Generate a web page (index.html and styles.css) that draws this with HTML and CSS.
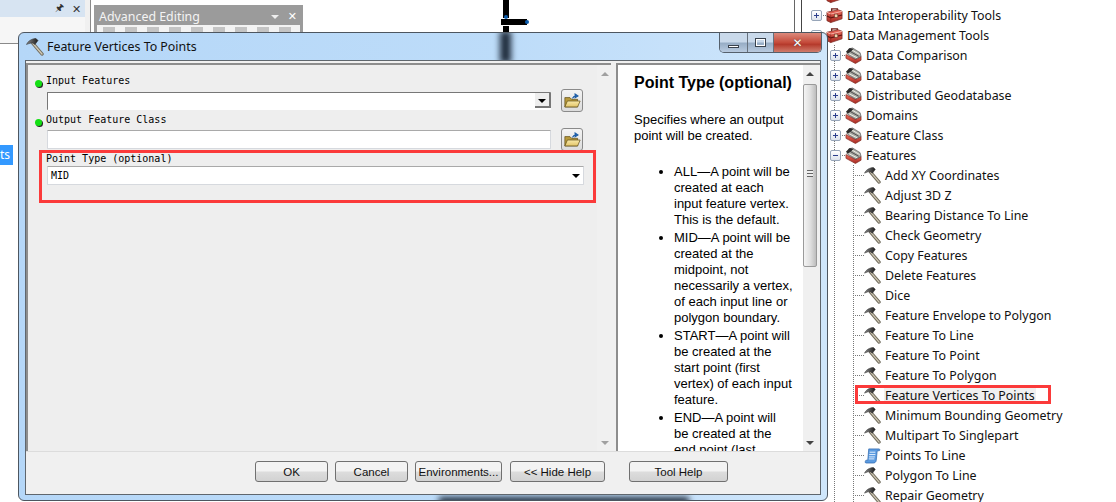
FILE: index.html
```html
<!DOCTYPE html>
<html lang="en">
<head>
    <meta charset="UTF-8">
    <meta name="viewport" content="width=device-width, initial-scale=1.0">
    <title>Feature Vertices To Points</title>
    <link rel="stylesheet" href="styles.css">
</head>
<body>
    <!-- shared tree and button icons -->
    <svg class="icon-defs" width="0" height="0">
        <defs>
            <linearGradient id="headFill" x1="0" y1="0" x2="1" y2="0">
                <stop offset="0" stop-color="#8a8a8a"/>
                <stop offset="1" stop-color="#1c1c1c"/>
            </linearGradient>
            <linearGradient id="boxFill" x1="0" y1="0" x2="0" y2="1">
                <stop offset="0" stop-color="#ee6a5c"/>
                <stop offset="1" stop-color="#a52a22"/>
            </linearGradient>
            <linearGradient id="folderFill" x1="0" y1="0" x2="0" y2="1">
                <stop offset="0" stop-color="#f8e9a8"/>
                <stop offset="1" stop-color="#e2c468"/>
            </linearGradient>
            <symbol id="hammer" viewBox="0 0 18 18">
                <path d="M7 5.5 L16 16" stroke="#6f6a5c" stroke-width="3.4" stroke-linecap="round"/>
                <path d="M7 5.5 L16 16" stroke="#cfc8b4" stroke-width="1.4" stroke-linecap="round"/>
                <path d="M.5 6.5 C2 3 6 .5 10 .5 L12 2.5 L9 6.5 L6.5 5 C4.5 5 3 5.5 .5 6.5 Z" fill="url(#headFill)" stroke="#2c2c2c" stroke-width=".5"/>
            </symbol>
            <symbol id="toolbox" viewBox="0 0 18 17">
                <path d="M6 4 V1.5 H12 V3" fill="none" stroke="#6e2018" stroke-width="1.5"/>
                <path d="M1 5 L13 2.5 L17 4 V12 L5 16 L1 14 Z" fill="url(#boxFill)" stroke="#7c2a22" stroke-width=".8"/>
                <path d="M1 5 L5 7 L17 4" fill="none" stroke="#f7b8ac" stroke-width="1"/>
                <path d="M1 9 L5 11 L17 8" fill="none" stroke="#5e1610" stroke-width="1.2"/>
                <path d="M5 7 V16" stroke="#8a241c" stroke-width=".7"/>
                <rect x="9" y="7" width="3.5" height="3.5" fill="#ecd6ae" stroke="#5a1e18" stroke-width=".5"/>
            </symbol>
            <symbol id="toolset" viewBox="0 0 18 18">
                <path d="M1 8 L11 13 L17 10 V14 L11 17.5 L1 12 Z" fill="url(#boxFill)" stroke="#7c2a22" stroke-width=".7"/>
                <path d="M2 7 L4 2 L8 1 L16 6 L17 10 L11 13 Z" fill="#a8a8a2" stroke="#444" stroke-width=".6"/>
                <path d="M7 3 L15.5 8 M4 7 L13 11.5" stroke="#f0f0e8" stroke-width="1"/>
                <path d="M6 5 L14.5 9.8" stroke="#4a4a4a" stroke-width="1"/>
                <path d="M1 5 L5 1 L9 2 L6 5 L3 7 Z" fill="#2c2c2c"/>
            </symbol>
            <symbol id="script" viewBox="0 0 18 18">
                <path d="M5 2 H16 C17 2 17 4 16 4 L14 4 L13 14 C13 16 11 17 10 17 H2 C1 17 1 14 2.5 14 H4 Z" fill="#5b9be0" stroke="#2460a8" stroke-width=".7"/>
                <path d="M6 5.5 H12 M5.5 8 H12 M5.2 10.5 H11.5 M5 12.6 H11" stroke="#e8f2ff" stroke-width="1"/>
            </symbol>
            <symbol id="folder" viewBox="0 0 20 18">
                <path d="M1 16 V5 H7 L9 7 H16 V16 Z" fill="#b89a3c" stroke="#5c4a14" stroke-width=".8"/>
                <path d="M1 16 L4 9 H19 L16 16 Z" fill="url(#folderFill)" stroke="#5c4a14" stroke-width=".8"/>
                <path d="M10 6 C11 3 13 3 14 3 M13 0.8 L16.5 3 L13 5.2 Z" fill="#1f5fa8" stroke="#1f5fa8" stroke-width="1.2"/>
            </symbol>
        </defs>
    </svg>

    <div class="desktop">
        <!-- windows behind the dialog -->
        <div class="dock-window">
            <div class="dock-title">
                <span class="dock-pin">&#128392;</span>
                <span class="dock-close">&#10005;</span>
            </div>
        </div>
        <div class="dock-tab">ts</div>

        <div class="floating-toolbar">
            <div class="floating-title">
                <span class="floating-name">Advanced Editing</span>
                <span class="floating-arrow"></span>
                <span class="floating-close">&#10005;</span>
            </div>
            <div class="floating-icons"></div>
        </div>

        <svg class="map-sketch" width="40" height="34" viewBox="0 0 40 34">
            <path d="M7 0 V18 M2 22 H28 M7 26 V34" stroke="#000" stroke-width="6"/>
            <circle cx="7" cy="17" r="2" fill="#0b5cad"/>
            <circle cx="28" cy="22" r="2" fill="#0b5cad"/>
        </svg>

        <div class="catalog-edge"></div>

        <!-- toolbox tree -->
        <div class="catalog">
            <div class="tree-guide guide-tools"></div>
            <div class="tree-guide guide-set"></div>
            <ul class="tree">
                <li class="row row-box"><svg class="ico"><use href="#toolbox"/></svg></li>
                <li class="row row-box"><span class="toggle plus"></span><svg class="ico"><use href="#toolbox"/></svg><span class="label">Data Interoperability Tools</span></li>
                <li class="row row-box"><span class="toggle minus"></span><svg class="ico"><use href="#toolbox"/></svg><span class="label">Data Management Tools</span></li>
                <li class="row row-set"><span class="toggle plus"></span><svg class="ico"><use href="#toolset"/></svg><span class="label">Data Comparison</span></li>
                <li class="row row-set"><span class="toggle plus"></span><svg class="ico"><use href="#toolset"/></svg><span class="label">Database</span></li>
                <li class="row row-set"><span class="toggle plus"></span><svg class="ico"><use href="#toolset"/></svg><span class="label">Distributed Geodatabase</span></li>
                <li class="row row-set"><span class="toggle plus"></span><svg class="ico"><use href="#toolset"/></svg><span class="label">Domains</span></li>
                <li class="row row-set"><span class="toggle plus"></span><svg class="ico"><use href="#toolset"/></svg><span class="label">Feature Class</span></li>
                <li class="row row-set"><span class="toggle minus"></span><svg class="ico"><use href="#toolset"/></svg><span class="label">Features</span></li>
                <li class="row row-tool"><svg class="ico"><use href="#hammer"/></svg><span class="label">Add XY Coordinates</span></li>
                <li class="row row-tool"><svg class="ico"><use href="#hammer"/></svg><span class="label">Adjust 3D Z</span></li>
                <li class="row row-tool"><svg class="ico"><use href="#hammer"/></svg><span class="label">Bearing Distance To Line</span></li>
                <li class="row row-tool"><svg class="ico"><use href="#hammer"/></svg><span class="label">Check Geometry</span></li>
                <li class="row row-tool"><svg class="ico"><use href="#hammer"/></svg><span class="label">Copy Features</span></li>
                <li class="row row-tool"><svg class="ico"><use href="#hammer"/></svg><span class="label">Delete Features</span></li>
                <li class="row row-tool"><svg class="ico"><use href="#hammer"/></svg><span class="label">Dice</span></li>
                <li class="row row-tool"><svg class="ico"><use href="#hammer"/></svg><span class="label">Feature Envelope to Polygon</span></li>
                <li class="row row-tool"><svg class="ico"><use href="#hammer"/></svg><span class="label">Feature To Line</span></li>
                <li class="row row-tool"><svg class="ico"><use href="#hammer"/></svg><span class="label">Feature To Point</span></li>
                <li class="row row-tool"><svg class="ico"><use href="#hammer"/></svg><span class="label">Feature To Polygon</span></li>
                <li class="row row-tool selected"><svg class="ico"><use href="#hammer"/></svg><span class="label">Feature Vertices To Points</span></li>
                <li class="row row-tool"><svg class="ico"><use href="#hammer"/></svg><span class="label">Minimum Bounding Geometry</span></li>
                <li class="row row-tool"><svg class="ico"><use href="#hammer"/></svg><span class="label">Multipart To Singlepart</span></li>
                <li class="row row-tool"><svg class="ico"><use href="#script"/></svg><span class="label">Points To Line</span></li>
                <li class="row row-tool"><svg class="ico"><use href="#hammer"/></svg><span class="label">Polygon To Line</span></li>
                <li class="row row-tool"><svg class="ico"><use href="#hammer"/></svg><span class="label">Repair Geometry</span></li>
            </ul>
        </div>

        <!-- tool dialog -->
        <div class="dialog">
            <div class="glass-smear smear-title"></div>
            <div class="glass-smear smear-bottom"></div>
            <div class="titlebar">
                <svg class="title-icon"><use href="#hammer"/></svg>
                <span class="title-text">Feature Vertices To Points</span>
                <div class="caption-buttons">
                    <span class="cap cap-min"><i></i></span>
                    <span class="cap cap-max"><i></i></span>
                    <span class="cap cap-close">&#10005;</span>
                </div>
            </div>
            <div class="client">
                <div class="panes">
                    <div class="form-pane">
                        <div class="form-scroll">
                            <div class="param param-first">
                                <span class="req-dot"></span>
                                <label class="param-label">Input Features</label>
                                <div class="param-row">
                                    <div class="field field-sunken"><span class="drop-btn"></span></div>
                                    <button class="browse" type="button"><svg><use href="#folder"/></svg></button>
                                </div>
                            </div>
                            <div class="param param-second">
                                <span class="req-dot"></span>
                                <label class="param-label">Output Feature Class</label>
                                <div class="param-row">
                                    <div class="field"></div>
                                    <button class="browse" type="button"><svg><use href="#folder"/></svg></button>
                                </div>
                            </div>
                            <div class="param param-third">
                                <label class="param-label">Point Type (optional)</label>
                                <div class="field field-wide"><span class="field-value">MID</span><span class="drop-arrow"></span></div>
                            </div>
                        </div>
                        <div class="scrollbar scrollbar-empty">
                            <span class="arrow-up"></span>
                            <span class="arrow-down"></span>
                        </div>
                    </div>
                    <div class="help-pane">
                        <div class="help-text">
                            <h2>Point Type (optional)</h2>
                            <p>Specifies where an output point will be created.</p>
                            <ul>
                                <li>ALL&mdash;A point will be created at each input feature vertex. This is the default.</li>
                                <li>MID&mdash;A point will be created at the midpoint, not necessarily a vertex, of each input line or polygon boundary.</li>
                                <li>START&mdash;A point will be created at the start point (first vertex) of each input feature.</li>
                                <li>END&mdash;A point will be created at the end point (last</li>
                            </ul>
                        </div>
                        <div class="scrollbar">
                            <span class="arrow-up arrow-dark"></span>
                            <span class="thumb"><i></i></span>
                            <span class="arrow-down arrow-dark"></span>
                        </div>
                    </div>
                </div>
                <div class="button-bar">
                    <button class="btn btn-ok" type="button">OK</button>
                    <button class="btn btn-cancel" type="button">Cancel</button>
                    <button class="btn btn-env" type="button">Environments...</button>
                    <button class="btn btn-hide" type="button">&lt;&lt; Hide Help</button>
                    <button class="btn btn-tool" type="button">Tool Help</button>
                </div>
            </div>
        </div>

        <!-- red callouts drawn on top -->
        <div class="callout callout-param"></div>
        <div class="callout callout-tool"></div>
    </div>
</body>
</html>
```

FILE: styles.css
```css
html, body {
    margin: 0;
    padding: 0;
    background-color: #fff;
}
.icon-defs {
    position: absolute;
}
.desktop {
    position: relative;
    width: 1116px;
    height: 502px;
    overflow: hidden;
    background-color: #fff;
    font-family: "Noto Sans", sans-serif;
    font-size: 12px;
    color: #111;
}

/* windows in the background */
.dock-window {
    position: absolute;
    left: 0;
    top: 0;
    width: 85px;
    height: 43px;
    background-color: #f6f6f6;
    border-right: 5px solid #f0f0f0;
    border-bottom: 1px solid #8a8a8a;
    box-shadow: 1px 0 0 #8a8a8a;
}
.dock-title {
    display: flex;
    justify-content: flex-end;
    align-items: center;
    gap: 8px;
    height: 17px;
    padding-right: 4px;
    background-color: #d7e4f2;
    color: #333;
    font-size: 11px;
}
.dock-pin {
    font-size: 10px;
    font-family: "DejaVu Sans", sans-serif;
}
.dock-tab {
    position: absolute;
    left: 0;
    top: 145px;
    width: 13px;
    height: 20px;
    background-color: #3399ff;
    color: #fff;
    font-size: 12px;
    line-height: 20px;
}
.floating-toolbar {
    position: absolute;
    left: 94px;
    top: 5px;
    width: 203px;
    height: 27px;
    border: 3px solid #9b9b9b;
    border-bottom: none;
    background-color: #f3f3f3;
}
.floating-title {
    display: flex;
    align-items: center;
    height: 17px;
    padding: 0 3px 0 2px;
    background-color: #9b9b9b;
    color: #f4f4f4;
}
.floating-name {
    flex: 1;
    font-size: 12.4px;
}
.floating-arrow {
    width: 0;
    height: 0;
    margin-right: 9px;
    border-left: 4px solid transparent;
    border-right: 4px solid transparent;
    border-top: 4px solid #eee;
}
.floating-close {
    font-size: 11px;
    font-weight: bold;
    font-family: "DejaVu Sans", sans-serif;
    color: #fff;
}
.floating-icons {
    height: 5px;
    margin: 2px 6px 0;
    background: repeating-linear-gradient(90deg, #c4c4c4 0 12px, #f3f3f3 12px 22px);
}
.map-sketch {
    position: absolute;
    left: 499px;
    top: 0;
}
.catalog-edge {
    position: absolute;
    left: 794px;
    top: 0;
    width: 6px;
    height: 34px;
    border-left: 1px solid #666;
    border-right: 1px solid #444;
}

/* catalog tree */
.catalog {
    position: absolute;
    left: 803px;
    top: 0;
    right: 0;
    bottom: 0;
    overflow: hidden;
}
.tree {
    list-style: none;
    margin: -15px 0 0;
    padding: 0;
}
.row {
    position: relative;
    display: flex;
    align-items: center;
    height: 20px;
    white-space: nowrap;
}
.row-box {
    padding-left: 23px;
}
.row-set {
    padding-left: 42px;
}
.row-tool {
    padding-left: 61px;
}
.ico {
    flex: none;
    width: 17px;
    height: 17px;
    margin-right: 4px;
}
.label {
    margin-left: -1px;
    padding: 0 1px;
    font-size: 12.4px;
    line-height: 17px;
}
.selected .label {
    background-color: #f0f0f0;
}
.toggle {
    position: absolute;
    top: 5px;
    width: 9px;
    height: 9px;
    border: 1px solid #97a5b8;
    border-radius: 2px;
    background: linear-gradient(#fff, #dde3ec);
}
.row-box .toggle {
    left: 8px;
}
.row-set .toggle {
    left: 27px;
}
.toggle::before {
    content: "";
    position: absolute;
    left: 2px;
    top: 4px;
    width: 5px;
    height: 1px;
    background-color: #2c3f8c;
}
.toggle.plus::after {
    content: "";
    position: absolute;
    left: 4px;
    top: 2px;
    width: 1px;
    height: 5px;
    background-color: #2c3f8c;
}
/* horizontal dotted connector beside each node */
.row-box::before,
.row-set::before,
.row-tool::before {
    content: "";
    position: absolute;
    top: 10px;
    height: 0;
    border-top: 1px dotted #777;
}
.row-box::before {
    left: 18px;
    width: 5px;
}
.row-set::before {
    left: 37px;
    width: 5px;
}
.row-tool::before {
    left: 50px;
    width: 11px;
}
.tree-guide {
    position: absolute;
    width: 0;
    border-left: 1px dotted #777;
}
.guide-tools {
    left: 31px;
    top: 45px;
    bottom: 0;
}
.guide-set {
    left: 50px;
    top: 165px;
    bottom: 0;
}

/* dialog frame */
.dialog {
    position: absolute;
    left: 18px;
    top: 32px;
    width: 808px;
    height: 467px;
    display: flex;
    flex-direction: column;
    border: 1px solid #4d5660;
    border-radius: 6px;
    background: linear-gradient(90deg, #b5d7f8, #bddcf9 60%, #cfe6fb);
    overflow: hidden;
}
.glass-smear {
    position: absolute;
    background-color: #1d2a3a;
    filter: blur(3px);
}
.smear-title {
    left: 481px;
    top: -2px;
    width: 11px;
    height: 32px;
}
.smear-bottom {
    left: 420px;
    top: 464px;
    width: 250px;
    height: 8px;
}
.titlebar {
    position: relative;
    display: flex;
    align-items: center;
    flex: none;
    height: 27px;
    padding-left: 7px;
}
.title-icon {
    width: 18px;
    height: 18px;
    margin-right: 3px;
}
.title-text {
    font-size: 12.4px;
}
.caption-buttons {
    position: absolute;
    right: 5px;
    top: 0;
    display: flex;
    height: 19px;
    border: 1px solid #55606c;
    border-top: none;
    border-radius: 0 0 5px 5px;
    overflow: hidden;
}
.cap {
    display: flex;
    align-items: center;
    justify-content: center;
    height: 19px;
    background: linear-gradient(#c9d9ea 45%, #98aec6 55%, #b9cbe0);
    border-right: 1px solid #66717d;
}
.cap-min {
    width: 27px;
}
.cap-min i {
    width: 11px;
    height: 3px;
    margin-top: 7px;
    border: 1px solid #39424d;
    background-color: #fff;
    box-sizing: border-box;
}
.cap-max {
    width: 25px;
}
.cap-max i {
    width: 11px;
    height: 9px;
    border: 1px solid #39424d;
    box-sizing: border-box;
    box-shadow: inset 0 0 0 1px #fff;
}
.cap-close {
    width: 47px;
    border-right: none;
    background: linear-gradient(#dc8a7c, #c44a3a 50%, #b53a2c 60%, #d07c6c);
    color: #fff;
    font-family: "DejaVu Sans", sans-serif;
    font-size: 12px;
    font-weight: bold;
    text-shadow: 0 0 1px #333;
}
.client {
    position: relative;
    display: flex;
    flex-direction: column;
    flex: 1;
    min-height: 0;
    margin: 0 6px 5px;
    border: 1px solid #5f666d;
    background-color: #f0f0f0;
}
.panes {
    display: flex;
    flex: 1;
    min-height: 0;
    gap: 5px;
    padding-top: 2px;
    border-bottom: 1px solid #dcdcdc;
}

/* parameter form on the left */
.form-pane {
    display: flex;
    width: 585px;
    border-top: 2px solid #8d8d8d;
    border-left: 2px solid #8d8d8d;
    box-sizing: border-box;
    background-color: #eee;
}
.form-scroll {
    position: relative;
    flex: 1;
    padding: 10px 13px 0 19px;
    font-family: "DejaVu Sans Mono", monospace;
    font-size: 10px;
    color: #000;
}
.param {
    position: relative;
    height: 39px;
}
.param-label {
    display: block;
    height: 12px;
    margin-left: -1px;
    line-height: 12px;
}
.param-row {
    display: flex;
    align-items: center;
    gap: 10px;
    margin-top: 2px;
}
.param-third .field {
    margin-top: 1px;
}
.req-dot {
    position: absolute;
    left: -12px;
    top: 5px;
    width: 7px;
    height: 7px;
    border-radius: 50%;
    background-color: #14e014;
    box-shadow: 1px 1px 0 #222;
}
.field {
    position: relative;
    box-sizing: border-box;
    width: 504px;
    height: 19px;
    border: 1px solid #d6d9de;
    border-top-color: #a9a9a9;
    border-radius: 1px;
    background-color: #fff;
}
.field-sunken {
    height: 18px;
    border-left: 1px solid #777;
    border-top: 1px solid #777;
    border-right: none;
    border-bottom: none;
}
.field-wide {
    width: 537px;
    line-height: 17px;
}
.field-value {
    padding-left: 3px;
}
.drop-btn {
    position: absolute;
    right: 0;
    top: 0;
    width: 16px;
    height: 15px;
    box-sizing: border-box;
    border-right: 2px solid #777;
    border-bottom: 2px solid #777;
    background-color: #eee;
}
.drop-btn::after,
.drop-arrow {
    content: "";
    position: absolute;
    width: 0;
    height: 0;
    border-left: 4px solid transparent;
    border-right: 4px solid transparent;
    border-top: 4px solid #000;
}
.drop-btn::after {
    left: 3px;
    top: 6px;
}
.drop-arrow {
    right: 3px;
    top: 7px;
}
.browse {
    display: flex;
    align-items: center;
    justify-content: center;
    width: 22px;
    height: 23px;
    padding: 0;
    border: 1px solid #8a8a8a;
    border-radius: 3px;
    background: linear-gradient(#f4f4f4, #dcdcdc);
}
.browse svg {
    width: 17px;
    height: 16px;
}

/* scrollbars */
.scrollbar {
    position: relative;
    flex: none;
    width: 15px;
    background-color: #f0f0f0;
}
.arrow-up,
.arrow-down {
    position: absolute;
    left: 4px;
    width: 0;
    height: 0;
    border-left: 4px solid transparent;
    border-right: 4px solid transparent;
}
.arrow-up {
    top: 7px;
    border-bottom: 4px solid #a0a0a0;
}
.arrow-down {
    bottom: 6px;
    border-top: 4px solid #a0a0a0;
}
.arrow-dark {
    left: 3px;
}
.arrow-dark.arrow-up {
    border-bottom-color: #444;
}
.arrow-dark.arrow-down {
    border-top-color: #444;
}
.thumb {
    position: absolute;
    left: 0;
    top: 19px;
    width: 14px;
    height: 183px;
    box-sizing: border-box;
    border: 1px solid #9a9a9a;
    border-radius: 2px;
    background: linear-gradient(90deg, #f4f4f4, #dedede 55%, #bdbdbd);
}
.thumb i {
    position: absolute;
    left: 3px;
    top: 85px;
    width: 6px;
    height: 7px;
    background: repeating-linear-gradient(#666 0 1px, #eee 1px 3px);
}

/* help text on the right */
.help-pane {
    display: flex;
    flex: 1;
    min-width: 0;
    overflow: hidden;
    border-top: 2px solid #8d8d8d;
    border-left: 2px solid #8d8d8d;
    box-sizing: border-box;
    background-color: #fff;
}
.help-pane .scrollbar {
    width: 17px;
}
.help-text {
    flex: 1;
    min-width: 0;
    overflow: hidden;
    padding: 8px 10px 0 16px;
    font-family: "Liberation Sans", Arial, sans-serif;
    font-size: 13px;
    line-height: 16px;
    color: #000;
}
.help-text h2 {
    margin: 0 0 19px;
    font-size: 16px;
    line-height: 20px;
    white-space: nowrap;
}
.help-text p {
    margin: 0 0 20px;
}
.help-text ul {
    margin: 0;
    padding-left: 40px;
}
.help-text li {
    margin-bottom: 2px;
}

/* bottom buttons */
.button-bar {
    position: relative;
    flex: none;
    height: 42px;
    box-sizing: border-box;
    padding-top: 9px;
    display: flex;
}
.btn {
    height: 21px;
    padding: 0;
    border: 1px solid #707070;
    border-radius: 3px;
    background: linear-gradient(#f3f3f3 45%, #dcdcdc 55%, #d2d2d2);
    font-family: "Liberation Sans", Arial, sans-serif;
    font-size: 11.5px;
    color: #111;
}
.btn-ok {
    width: 73px;
    margin-left: 229px;
}
.btn-cancel {
    width: 73px;
    margin-left: 7px;
}
.btn-env {
    width: 87px;
    margin-left: 7px;
}
.btn-hide {
    width: 95px;
    margin-left: 8px;
}
.btn-tool {
    width: 99px;
    margin-left: 24px;
}

/* red callouts */
.callout {
    position: absolute;
    box-sizing: border-box;
    border: 3px solid #fb3a3a;
}
.callout-param {
    left: 39px;
    top: 150px;
    width: 557px;
    height: 53px;
}
.callout-tool {
    left: 855px;
    top: 385px;
    width: 196px;
    height: 19px;
}
```
